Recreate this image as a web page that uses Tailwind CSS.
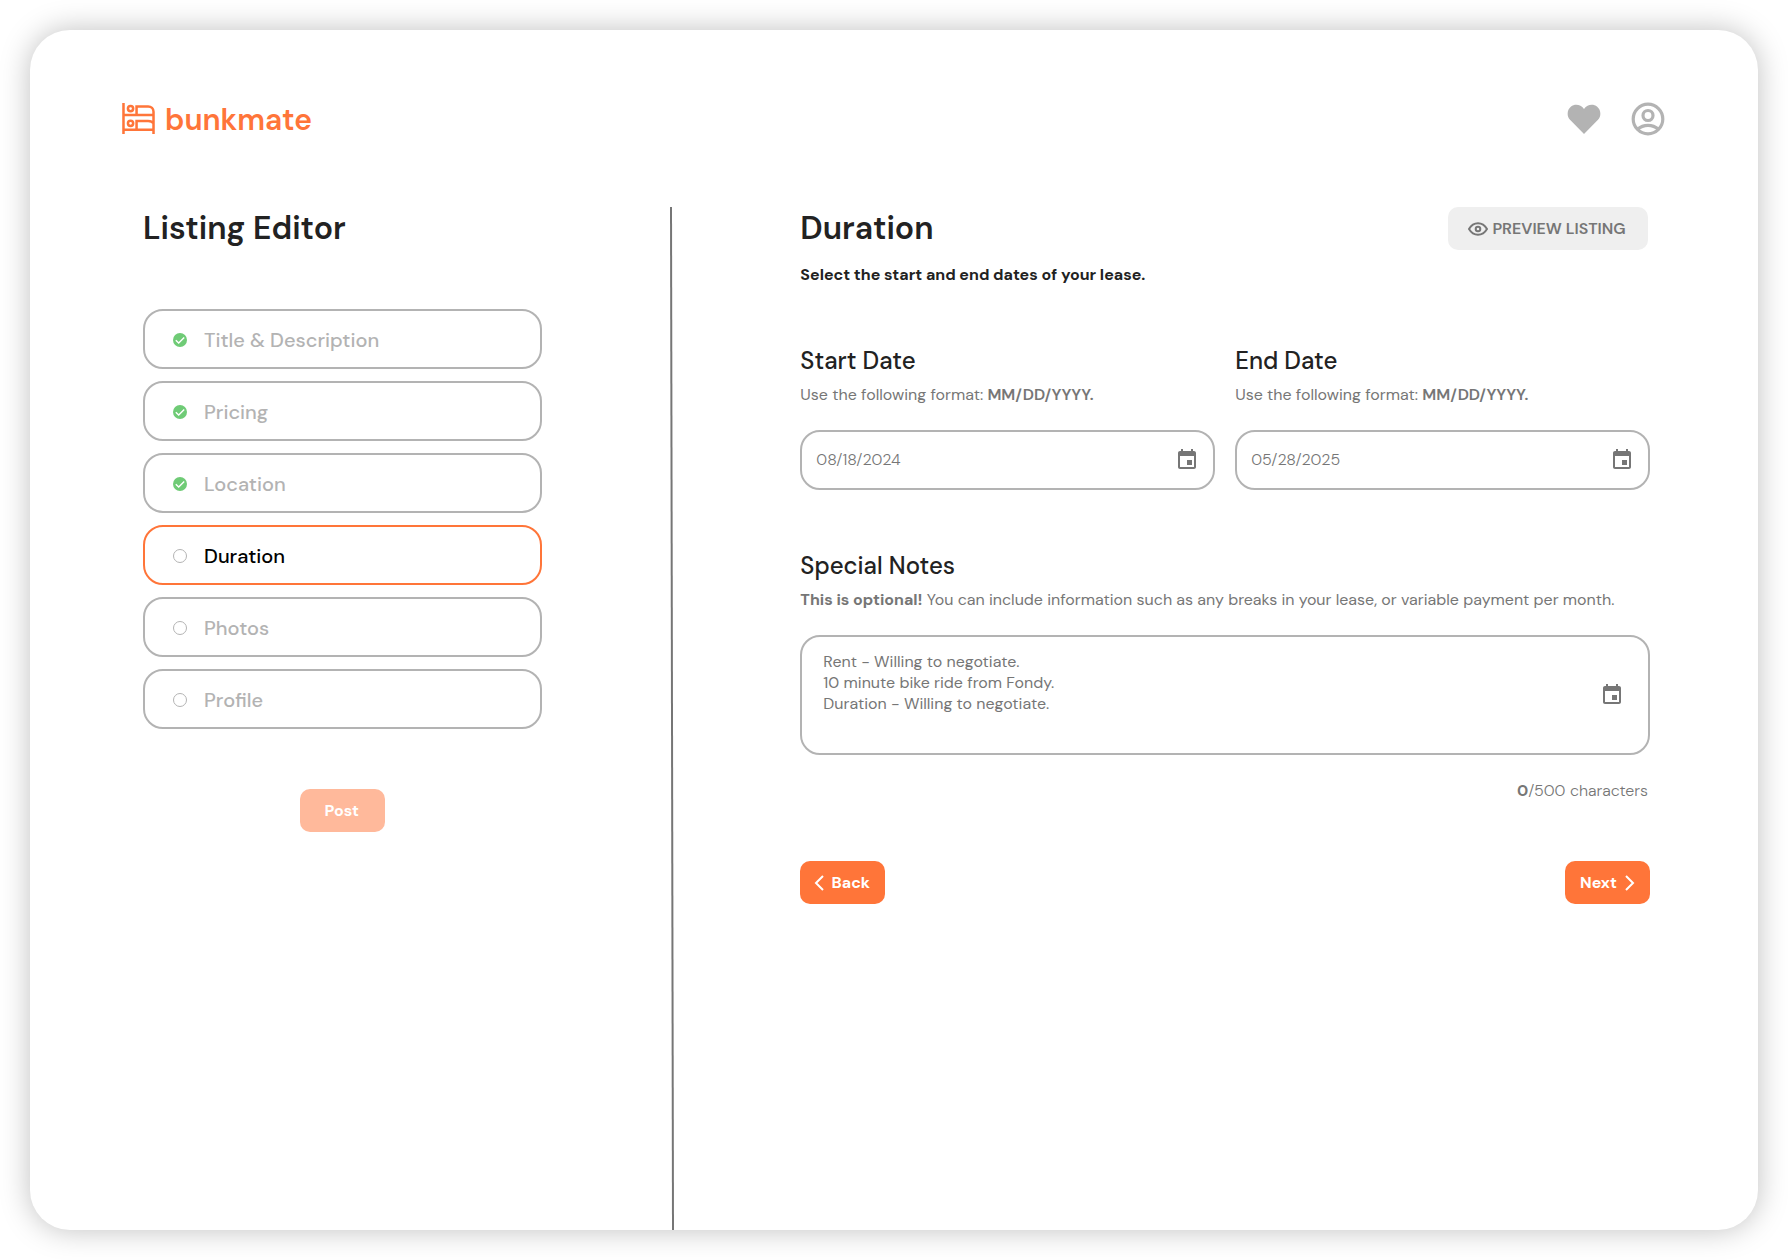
<!DOCTYPE html>
<html lang="en">
<head>
    <meta charset="UTF-8">
    <meta name="viewport" content="width=device-width, initial-scale=1.0">
    <title>bunkmate - Listing Editor</title>
    <script src="https://cdn.jsdelivr.net/npm/@tailwindcss/browser@4"></script>
</head>
<body class="flex min-h-screen bg-white p-[30px] font-['DM_Sans','Inter',sans-serif] text-[#222222] [font-optical-sizing:none]">
    <!-- Shared icons -->
    <svg class="hidden">
        <symbol id="icon-done" viewBox="0 0 14 14">
            <circle cx="7" cy="7" r="7" fill="#6fcb76" />
            <path d="M2.8 7.2l2.9 2.9 5.5-5.6" fill="none" stroke="#fff" stroke-width="1.4" />
        </symbol>
        <symbol id="icon-todo" viewBox="0 0 14 14">
            <circle cx="7" cy="7" r="6.5" fill="none" stroke="#b3b3b3" />
        </symbol>
        <symbol id="icon-calendar" viewBox="0 0 24 24">
            <path d="M17 12h-5v5h5v-5zM16 1v2H8V1H6v2H5c-1.110 0-1.990.9-1.990 2L3 19c0 1.100.890 2 2 2h14c1.100 0 2-.9 2-2V5c0-1.100-.9-2-2-2h-1V1h-2zm3 18H5V8h14v11z" />
        </symbol>
    </svg>

    <div class="flex flex-1 flex-col rounded-[40px] bg-white shadow-[0_0_30px_rgba(0,0,0,0.25)]">
        <!-- Top bar -->
        <header class="flex items-center justify-between px-[92px] pt-[71px]">
            <a href="#" class="flex items-center gap-2.5 text-[#ff7539]">
                <svg class="mb-0.5 h-[31px] w-[33px]" viewBox="0 0 34 32" fill="none" stroke="currentColor" stroke-width="2.600">
                    <path d="M1.500 0v32M1.500 12.500h31M1.500 27.500h31M15 12.500V3.500h12a5.500 5.500 0 0 1 5.500 5.500V32M15 27.500v-9h12c3 0 4.500 1 5.500 2.500" />
                    <circle cx="8.800" cy="5.800" r="2.700" />
                    <circle cx="8.800" cy="21" r="2.700" />
                </svg>
                <span class="pt-px text-[30px] leading-9 font-semibold">bunkmate</span>
            </a>
            <nav class="flex items-center gap-[30px] pr-px pb-0.5 text-[#b3b3b3]">
                <a href="#" aria-label="Favorites">
                    <svg class="h-[30px] w-[34px]" viewBox="0 0 34 30" fill="currentColor">
                        <path d="M17 30L3 15.800C-.5 12 0 5.800 3.800 2.800 7.700-.3 13.500.2 17 5 20.500.2 26.300-.3 30.200 2.800 34 5.800 34.500 12 31 15.800z" />
                    </svg>
                </a>
                <a href="#" aria-label="Account">
                    <svg class="size-[34px]" viewBox="0 0 34 34" fill="none" stroke="currentColor" stroke-width="3.200">
                        <circle cx="17" cy="17" r="14.800" />
                        <circle cx="17" cy="13.500" r="5" />
                        <path d="M6.500 27.300c6-5.200 15-5.200 21 0" />
                    </svg>
                </a>
            </nav>
        </header>

        <main class="flex flex-1 pt-[69px]">
            <!-- Steps -->
            <aside class="w-[37%] pr-[127px] pl-[113px]">
                <h1 class="text-[32px] leading-[43px] font-semibold">Listing Editor</h1>
                <ol class="mt-[59px] flex flex-col gap-3 text-xl font-medium text-[#b3b3b3]">
                    <li><a href="#" class="flex h-[60px] items-center gap-[17px] rounded-[20px] border-2 border-[#b3b3b3] px-7 pt-px"><svg class="size-3.5"><use href="#icon-done" /></svg>Title &amp; Description</a></li>
                    <li><a href="#" class="flex h-[60px] items-center gap-[17px] rounded-[20px] border-2 border-[#b3b3b3] px-7 pt-px"><svg class="size-3.5"><use href="#icon-done" /></svg>Pricing</a></li>
                    <li><a href="#" class="flex h-[60px] items-center gap-[17px] rounded-[20px] border-2 border-[#b3b3b3] px-7 pt-px"><svg class="size-3.5"><use href="#icon-done" /></svg>Location</a></li>
                    <li><a href="#" aria-current="step" class="flex h-[60px] items-center gap-[17px] rounded-[20px] border-2 border-[#ff7539] px-7 pt-px text-black"><svg class="size-3.5"><use href="#icon-todo" /></svg>Duration</a></li>
                    <li><a href="#" class="flex h-[60px] items-center gap-[17px] rounded-[20px] border-2 border-[#b3b3b3] px-7 pt-px"><svg class="size-3.5"><use href="#icon-todo" /></svg>Photos</a></li>
                    <li><a href="#" class="flex h-[60px] items-center gap-[17px] rounded-[20px] border-2 border-[#b3b3b3] px-7 pt-px"><svg class="size-3.5"><use href="#icon-todo" /></svg>Profile</a></li>
                </ol>
                <button type="button" disabled class="mx-auto mt-[60px] block h-[43px] w-[85px] rounded-[10px] bg-[#ffb99b] pr-0.5 text-base font-bold text-white">Post</button>
            </aside>

            <!-- Divider -->
            <svg class="w-[5px] self-stretch" viewBox="0 0 5 1000" preserveAspectRatio="none" stroke="#767676" stroke-width="2">
                <path d="M2 0L4 1000" vector-effect="non-scaling-stroke" />
            </svg>

            <!-- Duration form -->
            <form class="flex-1 pr-[108px] pl-[126px] text-base text-[#767676]">
                <div class="flex items-center justify-between pr-0.5">
                    <h2 class="text-[32px] leading-[43px] font-semibold text-[#222222]">Duration</h2>
                    <button type="button" class="flex h-[43px] w-[200px] items-center justify-center gap-1 rounded-[10px] bg-[#efefef] pr-0.5 font-semibold">
                        <svg class="h-3.5 w-5" viewBox="0 0 20 14" fill="none" stroke="currentColor" stroke-width="2">
                            <path d="M1 7c4.500-7.600 13.500-7.600 18 0-4.500 7.600-13.500 7.600-18 0z" />
                            <circle cx="10" cy="7" r="2.300" />
                        </svg>
                        PREVIEW LISTING
                    </button>
                </div>
                <p class="mt-[13px] leading-6 font-bold text-[#222222]">Select the start and end dates of your lease.</p>

                <div class="mt-[58px] grid grid-cols-2 gap-5">
                    <div>
                        <label for="start-date" class="block text-2xl font-medium text-[#222222]">Start Date</label>
                        <p class="mt-1.5 leading-6">Use the following format: <b class="font-semibold">MM/DD/YYYY.</b></p>
                        <div class="mt-[23px] flex h-[60px] items-center rounded-[20px] border-2 border-[#b3b3b3] px-3.5">
                            <input id="start-date" type="text" value="08/18/2024" class="w-full min-w-0 font-light outline-none">
                            <svg class="size-6 shrink-0 fill-[#767676]"><use href="#icon-calendar" /></svg>
                        </div>
                    </div>
                    <div>
                        <label for="end-date" class="block text-2xl font-medium text-[#222222]">End Date</label>
                        <p class="mt-1.5 leading-6">Use the following format: <b class="font-semibold">MM/DD/YYYY.</b></p>
                        <div class="mt-[23px] flex h-[60px] items-center rounded-[20px] border-2 border-[#b3b3b3] px-3.5">
                            <input id="end-date" type="text" value="05/28/2025" class="w-full min-w-0 font-light outline-none">
                            <svg class="size-6 shrink-0 fill-[#767676]"><use href="#icon-calendar" /></svg>
                        </div>
                    </div>
                </div>

                <label for="notes" class="mt-[60px] block text-2xl font-medium text-[#222222]">Special Notes</label>
                <p class="mt-1.5 leading-6"><b class="font-bold">This is optional!</b> You can include information such as any breaks in your lease, or variable payment per month.</p>
                <div class="mt-[23px] flex h-[120px] items-center rounded-[20px] border-2 border-[#b3b3b3] pr-6 pl-[21px]">
                    <textarea id="notes" class="h-full w-full resize-none pt-3.5 leading-[21px] outline-none">Rent - Willing to negotiate.
10 minute bike ride from Fondy.
Duration - Willing to negotiate.</textarea>
                    <svg class="size-6 shrink-0 fill-[#767676]"><use href="#icon-calendar" /></svg>
                </div>
                <p class="mt-6 pr-0.5 text-right leading-6 font-light"><b class="font-bold">0</b>/500 characters</p>

                <div class="mt-[58px] flex justify-between font-bold text-white">
                    <button type="button" class="flex h-[43px] w-[85px] items-center justify-center gap-2 rounded-[10px] bg-[#ff7539] pr-0.5">
                        <svg class="h-4 w-2.5" viewBox="0 0 10 16" fill="none" stroke="currentColor" stroke-width="2"><path d="M9 1L2 8l7 7" /></svg>
                        Back
                    </button>
                    <button type="submit" class="flex h-[43px] w-[85px] items-center justify-center gap-2 rounded-[10px] bg-[#ff7539]">
                        Next
                        <svg class="h-4 w-2.5" viewBox="0 0 10 16" fill="none" stroke="currentColor" stroke-width="2"><path d="M1 1l7 7-7 7" /></svg>
                    </button>
                </div>
            </form>
        </main>
    </div>
</body>
</html>
